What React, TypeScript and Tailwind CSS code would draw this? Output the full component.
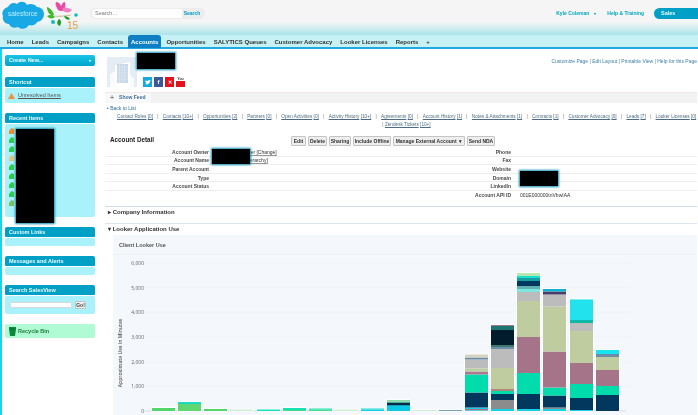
const tabs = ["Home", "Leads", "Campaigns", "Contacts", "Accounts", "Opportunities", "SALYTICS Queues", "Customer Advocacy", "Looker Licenses", "Reports", "+"];
const related = [
  ["Contact Roles", "[0]"], ["Contacts", "[10+]"], ["Opportunities", "[2]"], ["Partners", "[0]"], ["Open Activities", "[0]"],
  ["Activity History", "[10+]"], ["Agreements", "[0]"], ["Account History", "[1]"], ["Notes & Attachments", "[1]"], ["Contracts", "[1]"],
  ["Customer Advocacy", "[0]"], ["Leads", "[7]"], ["Looker Licenses", "[0]"],
];
const leftRows = [["Account Owner", "Kyle Coleman User [Change]"], ["Account Name", "Account [View Hierarchy]"], ["Parent Account", ""], ["Type", ""], ["Account Status", ""], ["", ""]];
const rightRows = [["Phone", ""], ["Fax", ""], ["Website", ""], ["Domain", ""], ["LinkedIn", ""], ["Account API ID", "001E000000tnVbwIAA"]];

type Seg = [number, string];
const navy = "#03385e";
const green = "#00dcac";
const mauve = "#a57489";
const sage = "#bfcc9f";
const grey = "#bcbcbc";
const cyan = "#16cfe6";
const bars: { x: number; segs: Seg[] }[] = [
  { x: 152, segs: [[3, "#52d66c"]] },
  { x: 178, segs: [[7, "#5fd873"], [2, "#19dcc0"]] },
  { x: 204, segs: [[2, "#52d66c"]] },
  { x: 230, segs: [[1.5, "#cdeed6"]] },
  { x: 257, segs: [[1.5, "#19e0c0"]] },
  { x: 283, segs: [[1, "#45dc90"], [2, "#19e0b0"]] },
  { x: 309, segs: [[1.5, "#45dc90"], [1, "#19e0b0"]] },
  { x: 335, segs: [[1.5, "#cdeed6"]] },
  { x: 361, segs: [[1.5, cyan], [1, "#19d8d0"]] },
  { x: 387, segs: [[5, "#0cc8e4"], [1, "#14a0b8"], [2, "#0d2a44"], [1.5, "#48b0a0"], [1.5, "#8cd8a0"]] },
  { x: 413, segs: [[1, "#cdeed6"]] },
  { x: 439, segs: [[1, "#7aa0b4"]] },
  { x: 465, segs: [[0.7, cyan], [1.3, "#a07888"], [1.5, cyan], [15, navy], [18, green], [3, "#a87890"], [3, "#b8d09c"], [9, grey], [2, "#6c8ca8"], [3, "#d4d4c0"]] },
  { x: 491, segs: [[2, cyan], [9, "#8c8c8c"], [6, navy], [3, green], [2, "#b08878"], [21, sage], [19, grey], [2, "#7090a8"], [2, "#3a7870"], [15, "#021c2e"], [4, "#1a7870"], [1, "#a07888"]] },
  { x: 517, segs: [[2, cyan], [15, navy], [21, green], [36, mauve], [36, sage], [9, grey], [3, "#7ce8e0"], [3, "#60b0b0"], [5, navy], [3, "#14a0a0"], [2, "#18e0d0"], [3, "#b8e8b0"]] },
  { x: 543, segs: [[2, cyan], [1.5, "#8c8c8c"], [12, navy], [8, green], [36, mauve], [45, sage], [12, grey], [3, "#4c3c68"], [2.5, "#10b0d0"]] },
  { x: 570, segs: [[1, cyan], [12, navy], [14, green], [21, mauve], [32, sage], [8, grey], [3, "#10b8a8"], [20, "#22e2ee"], [1, "#7cefe8"]] },
  { x: 596, segs: [[16, navy], [9, green], [16, mauve], [13, sage], [3, "#6c8ca8"], [4, "#16e4f0"]] },
];

function Box({ title, h, children }: { title: string; h: string; children?: React.ReactNode }) {
  return (
    <div className="flex flex-col gap-[1px]">
      <div className="h-[10px] rounded-t-[2px] rounded-b-[1px] bg-[#00a0c6] pl-[4px] text-[5.5px] font-bold leading-[10px] text-[#e8fbff]">{title}</div>
      <div className={`${h} rounded-[2px] bg-[#a9f1fb]`}>{children}</div>
    </div>
  );
}

function Logo() {
  return (
    <svg width="88" height="30" viewBox="0 0 88 30" className="shrink-0">
      <path d="M17 3c3-3 8-3 10 1 3-2 8-1 10 2 4 0 7 3 7 7s-3 8-7 8c-1 3-5 4-8 3-2 4-8 5-11 2-4 2-8 0-9-3-5 0-7-5-6-8-2-4 1-8 5-9 2-4 6-5 9-3z" fill="#19a8e6" />
      <text x="8" y="14.5" fontSize="6.5" fill="#bdeeff" fontFamily="Liberation Sans, sans-serif">salesforce</text>
      <path d="M56 1c2 0 4 1 5 4 1-2 2-4 4-4 1 3 0 6-1 8-3 2-6 1-7-2-1-2-2-4-1-6z" fill="#e84aa6" />
      <path d="M63 7c3-1 6 0 9 2-2 3-6 3-9 1z" fill="#f080c0" />
      <path d="M47 6c3 1 6 4 7 8-4 1-7-3-7-8zM47 15c2-1 6-2 8 1-2 2-6 2-8-1z" fill="#3cb82c" />
      <path d="M54 15c5 1 10 0 17-1" stroke="#c8c8a8" strokeWidth="1.2" fill="none" />
      <path d="M59 18c2 1 3 3 1 7-3-1-4-4-1-7zM64 15c2 0 5 1 6 3-2 2-5 0-6-3z" fill="#1f9e28" />
      <circle cx="53" cy="21" r="2" fill="#11bcc0" />
      <circle cx="76" cy="14" r="1.8" fill="#11bcc0" />
      <text x="67" y="28" fontSize="10" fill="#ef9a3a" fontFamily="Liberation Sans, sans-serif">15</text>
    </svg>
  );
}

function Building() {
  return (
    <svg width="30" height="30" viewBox="0 0 30 30" className="shrink-0">
      <rect width="30" height="30" fill="#e4ecf4" />
      <path d="M8 30V8l15-3v25z" fill="#ffffff" />
      <path d="M3 30V17l5-3v16zM23 30V18l4 3v9z" fill="#ffffff" opacity="0.8" />
      <rect x="10" y="7" width="11" height="19" fill="#c8d8e8" />
      <path d="M12.5 7v19M15 7v19M17.5 7v19M10 10h11M10 13h11M10 16h11M10 19h11M10 22h11" stroke="#e8eff5" strokeWidth="0.5" />
    </svg>
  );
}

function Social() {
  return (
    <div className="flex gap-[2px] text-[6px] font-bold leading-[10px] text-white">
      <div className="flex h-[10px] w-[9px] items-center justify-center bg-[#14a9e0]">
        <svg width="6" height="5" viewBox="0 0 6 5"><path d="M0 4c2 1 5 0 5-3l1-1-1 .3C4 -.5 3 .2 3 1 2 1 1 .5.4.2c0 1 0 1.5.6 2L.5 2c0 .5.4 1 1 1.2C1.2 3.8.6 4 0 4z" fill="#fff" /></svg>
      </div>
      <div className="h-[10px] w-[9px] bg-[#3b5998] text-center">f</div>
      <div className="h-[10px] w-[9px] bg-[#e3131e] text-center text-[5px]">✕</div>
      <div className="flex h-[10px] w-[9px] flex-col text-center text-[3.5px] leading-[4px] text-[#333]">You<div className="h-[6px] bg-[#e3131e]" /></div>
    </div>
  );
}

function Btn({ children, w }: { children: React.ReactNode; w: string }) {
  return (
    <div className={`${w} h-[10px] rounded-[1px] border border-[#c4c4c4] bg-[#eeeeee] text-center text-[5px] font-bold leading-[8px] text-[#333]`}>{children}</div>
  );
}

function Rows({ rows, w, labelW, valueClass }: { rows: string[][]; w: string; labelW: string; valueClass: string }) {
  return (
    <div className={`${w} flex flex-col`}>
      {rows.map(([k, v], i) => (
        <div key={k + i} className={`flex h-[8.6px] items-center text-[5px] leading-[8px] ${i < 5 ? "border-b border-[#eeeeee]" : ""}`}>
          <div className={`${labelW} shrink-0 pr-[3px] text-right font-bold text-[#4a4a4a]`}>{k}</div>
          <div className={`whitespace-nowrap text-[#333] ${valueClass}`}>{v}</div>
        </div>
      ))}
    </div>
  );
}

function Redact({ className }: { className: string }) {
  return <div className={`absolute bg-black shadow-[0_0_2px_1px_#0b8fb0] ${className}`} />;
}

function Chart() {
  const y0 = 411;
  const k = 148 / 6000;
  return (
    <svg width="585" height="160" viewBox="113 255 585 160" className="block" fontFamily="Open Sans, Liberation Sans, sans-serif">
      {[1, 2, 3, 4, 5, 6].map((n) => (
        <line key={n} x1="143" x2="630" y1={y0 - n * 1000 * k} y2={y0 - n * 1000 * k} stroke="#eef1f5" strokeWidth="0.6" />
      ))}
      <line x1="143" x2="626" y1={y0} y2={y0} stroke="#e2e6ea" strokeWidth="1.5" />
      {["0", "1,000", "2,000", "3,000", "4,000", "5,000", "6,000"].map((t, i) => (
        <text key={t} x="144" y={y0 - i * 1000 * k + 2} textAnchor="end" fontSize="5" fill="#666">{t}</text>
      ))}
      <text transform="translate(122 353) rotate(-90)" textAnchor="middle" fontSize="5" fontWeight="600" fill="#555">Approximate Use in Minutes</text>
      {bars.map((b) => {
        let y = y0;
        const total = b.segs.reduce((s, [h]) => s + h, 0);
        return (
          <g key={b.x}>
            <rect x={b.x - 0.7} y={y0 - total - 0.7} width="24.4" height={total + 1.4} fill="#ffffff" />
            {b.segs.map(([h, c], i) => {
              y -= h;
              return <rect key={i} x={b.x} y={y} width="23" height={h} fill={c} />;
            })}
          </g>
        );
      })}
    </svg>
  );
}

export default function App() {
  return (
    <div className="relative h-[415px] w-[698px] overflow-hidden bg-white font-['Liberation_Sans',Arial,sans-serif] blur-[0.5px]">
      {/* header */}
      <div className="flex h-[35px] items-start bg-gradient-to-b from-[#f5f5f5] from-[62%] to-[#a8e4ea] pt-[1px]">
        <Logo />
        <div className="mt-[7px] ml-[2px] flex h-[11px] w-[115px] items-center rounded-full bg-[#ececec] pr-[3px] pl-[2px]">
          <div className="flex h-[9px] w-[90px] items-center rounded-l-full bg-white pl-[3px] text-[5.5px] text-[#777]">Search...</div>
          <div className="flex-1 text-center text-[5px] font-bold text-[#00a0c6]">Search</div>
        </div>
        <div className="mt-[7px] ml-auto flex items-center text-[5px] font-bold text-[#00a8c0]">
          <span>Kyle Coleman</span>
          <span className="ml-[5px] text-[4px]">▾</span>
          <span className="ml-[11px]">Help &amp; Training</span>
          <div className="ml-[10px] h-[11px] w-[44px] rounded-l-full bg-[#00a0c6] pl-[7px] text-[5.5px] leading-[10px] text-[#e8fbff]">Sales</div>
        </div>
      </div>

      {/* tabs */}
      <div className="flex h-[14px] items-stretch gap-[8px] border-b-[2px] border-[#22a9e0] bg-[#c6f1f5] pl-[7px] text-[6px] font-bold text-[#333]">
        {tabs.map((t) =>
          t === "Accounts" ? (
            <div key={t} className="-mx-[3px] -mb-[1px] rounded-t-[3px] bg-[#0f7fc4] px-[3px] leading-[14px] text-white">{t}</div>
          ) : (
            <div key={t} className="leading-[14px]">{t}</div>
          ),
        )}
      </div>

      <div className="flex h-[366px]">
        {/* sidebar */}
        <div className="flex h-full w-[105px] shrink-0 flex-col border-l-[2px] border-[#19d3e6] pt-[6px] pr-[10px] pl-[3px]">
          <div className="flex h-[11px] items-center justify-between rounded-[2px] bg-gradient-to-b from-[#18c4e6] to-[#00a5cc] px-[4px] text-[5.5px] font-bold text-[#e8fbff]">
            <span>Create New...</span>
            <span className="text-[4px]">▾</span>
          </div>
          <div className="mt-[11px]">
            <Box title="Shortcut" h="h-[15px]">
              <div className="flex h-full items-center gap-[3px] pl-[3px] text-[5.5px] text-[#555] underline">
                <svg width="7" height="6" viewBox="0 0 7 6"><path d="M3.5 0L7 6H0z" fill="#f0913a" /></svg>
                Unresolved Items
              </div>
            </Box>
          </div>
          <div className="mt-[10px]">
            <Box title="Recent Items" h="h-[93px]">
              <div className="flex flex-col gap-[3px] pt-[4px] pl-[4px]">
                {["#f58a2a", "#2ecc4a", "#2ecc4a", "#e8c080", "#2ecc4a", "#2ecc4a", "#2ecc4a", "#2ecc4a", "#7cc060"].map((c, i) => (
                  <div key={i} className="flex h-[6px] items-center">
                    <svg width="5" height="6" viewBox="0 0 5 6"><path d="M2.5 0L5 1v5H0V3z" fill={c} /></svg>
                  </div>
                ))}
              </div>
            </Box>
          </div>
          <div className="mt-[10px]"><Box title="Custom Links" h="h-[8px]" /></div>
          <div className="mt-[10px]"><Box title="Messages and Alerts" h="h-[8px]" /></div>
          <div className="mt-[10px]">
            <Box title="Search SalesView" h="h-[18px]">
              <div className="flex h-full items-center gap-[3px] pl-[5px]">
                <div className="h-[6px] w-[62px] rounded-[1px] border border-[#d8d8d8] bg-white" />
                <div className="h-[8px] w-[11px] rounded-[1px] border border-[#c4c4c4] bg-[#eeeeee] text-center text-[5px] font-bold leading-[6px] text-[#444]">Go!</div>
              </div>
            </Box>
          </div>
          <div className="mt-[10px] flex h-[14px] items-center gap-[2px] rounded-[2px] bg-[#b0fbd4] pl-[4px] text-[5.5px] font-bold text-[#1f7a3a]">
            <svg width="7" height="9" viewBox="0 0 7 9"><path d="M0 0h7v2l-1 7H1L0 2z" fill="#0a8a3a" /><path d="M1 2h5" stroke="#063" strokeWidth="0.8" /></svg>
            Recycle Bin
          </div>
        </div>

        {/* main */}
        <div className="min-w-0 flex-1 pr-[1px]">
          <div className="relative flex h-[43px] pt-[8px] pl-[2px]">
            <Building />
            <div className="mt-[20px] ml-[6px]"><Social /></div>
            <div className="mt-[0px] ml-auto text-[5px] leading-[8px] text-[#3c7fa8]">Customize Page | Edit Layout | Printable View | Help for this Page</div>
          </div>
          <div className="flex h-[11px] border-t border-[#f2e8ec] bg-[#f2f2f2]">
            <div className="flex w-[46px] items-center gap-[5px] bg-[#f8f8f8] pl-[5px] text-[5px] font-bold text-[#3c6f98]">
              <span className="text-[7px] leading-[8px] text-[#888]">+</span>Show Feed
            </div>
          </div>
          <div className="mt-[1px] pl-[2px] text-[5px] leading-[8px] text-[#2f6f9f]">▪ Back to List</div>
          <div className="mt-[1px] pr-[1px] pl-[12px] text-center text-[4.7px] leading-[7.5px] whitespace-nowrap text-[#4d6a86]">
            {related.map(([a, b], i) => (
              <span key={a}>
                <span className="underline">{a}</span> <span className="underline">{b}</span>
                {i < related.length - 1 ? <span className="mx-[4.3px] text-[#777]">|</span> : null}
              </span>
            ))}
            <br />
            <span className="text-[#777]">| </span>
            <span className="underline">Zendesk Tickets</span> <span className="underline">[10+]</span>
          </div>

          <div className="mt-[6px] flex h-[14px] items-center pl-[5px]">
            <div className="mb-[2px] w-[86px] text-[6.3px] font-bold text-[#222]">Account Detail</div>
            <div className="ml-[95px] flex items-center gap-[2px]">
              <Btn w="w-[15px]">Edit</Btn>
              <Btn w="w-[19px]">Delete</Btn>
              <Btn w="w-[22px]">Sharing</Btn>
              <Btn w="w-[38px]">Include Offline</Btn>
              <Btn w="w-[72px]">Manage External Account &nbsp;▾</Btn>
              <Btn w="w-[28px]">Send NDA</Btn>
            </div>
          </div>
          <div className="flex items-start">
            <Rows rows={leftRows} w="w-[212px]" labelW="w-[107px]" valueClass="underline decoration-[#999]" />
            <Rows rows={rightRows} w="w-[380px]" labelW="w-[197px]" valueClass="pl-[6px]" />
          </div>

          <div className="mt-[6px] h-[17px] border-t border-[#cfdcea] pl-[3px] text-[6px] font-bold leading-[11px] text-[#333]">▸ Company Information</div>
          <div className="h-[12.4px] border-t border-[#dbe4f0] pl-[3px] text-[6px] font-bold leading-[11px] text-[#333]">▾ Looker Application Use</div>
          <div className="ml-[8px] bg-[#f4f7fb]">
            <div className="h-[20px] border-b border-[#eef1f5] pl-[6px] text-[5.5px] font-bold leading-[20px] text-[#555]">Client Looker Use</div>
            <Chart />
          </div>
        </div>
      </div>

      {/* redactions over the record data */}
      <Redact className="top-[53px] left-[137px] h-[16px] w-[38px]" />
      <Redact className="top-[129px] left-[16px] h-[94px] w-[38px]" />
      <Redact className="top-[149px] left-[212px] h-[15px] w-[38px]" />
      <Redact className="top-[171px] left-[520px] h-[15px] w-[38px]" />
    </div>
  );
}
